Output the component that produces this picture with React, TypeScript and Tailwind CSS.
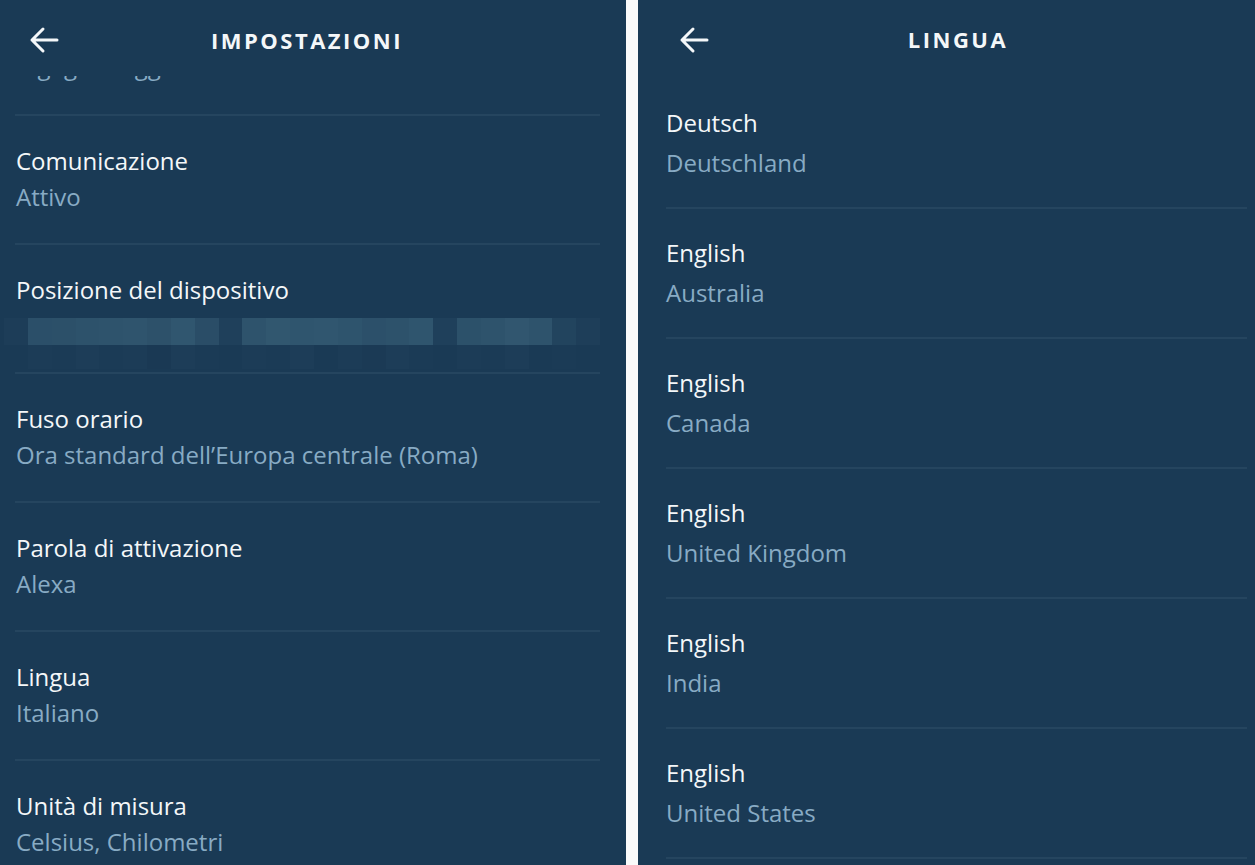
import { ReactNode } from "react";

const font = { fontFamily: '"Open Sans", "Noto Sans", sans-serif' };

function BackArrow() {
  return (
    <svg width="32" height="28" viewBox="0 0 32 28" fill="none" stroke="#f4f7f9" strokeWidth="3" strokeLinecap="round" strokeLinejoin="round">
      <path d="M29 14H4M15 3L4 14l11 11" />
    </svg>
  );
}

function Header({ title, className }: { title: string; className: string }) {
  return (
    <div className={`flex shrink-0 items-center ${className}`}>
      <BackArrow />
      <div className="flex-1 text-center text-[22px] font-bold tracking-[2.5px] text-[#f4f7f9]">{title}</div>
    </div>
  );
}

// pixelated (blurred) location line
const topBlocks = [
  "#1d3d58", "#2b4f69", "#2c5069", "#2d526b", "#2e536c", "#2f546d", "#2d516a", "#30566f", "#2a4d67",
  "#1f405b", "#2e536c", "#31576f", "#2f556e", "#30566f", "#2e546d", "#2c506a", "#2d526b", "#2f556e",
  "#1f405b", "#2c516a", "#2e536c", "#31566f", "#2e536c", "#22445e", "#1e3e59",
];
const bottomBlocks = [
  "#1a3a55", "#1c3c57", "#1b3b56", "#1d3d58", "#1b3b56", "#1c3c57", "#1a3954", "#1d3d58", "#1b3b56",
  "#1a3a55", "#1c3c57", "#1b3b56", "#1d3d58", "#1a3a55", "#1c3c57", "#1b3a55", "#1d3d58", "#1b3b56",
  "#1a3a55", "#1c3c57", "#1b3b56", "#1d3d58", "#1a3a55", "#1b3b56", "#1a3a55",
];

function Blurred() {
  return (
    <div className="-ml-[12px] flex flex-col pt-[10px]">
      <div className="flex h-[27px]">
        {topBlocks.map((c, i) => (
          <div key={i} className="h-full w-[24px]" style={{ background: c }} />
        ))}
      </div>
      <div className="flex h-[24px]">
        {bottomBlocks.map((c, i) => (
          <div key={i} className="h-full w-[24px]" style={{ background: c }} />
        ))}
      </div>
    </div>
  );
}

function LeftRow({ title, sub, children, pt = "pt-[27px]" }: { title?: string; sub?: string; children?: ReactNode; pt?: string }) {
  return (
    <div className={`flex h-[129px] shrink-0 flex-col pl-4 pr-[26px] ${pt}`}>
      <div className="h-[36px] text-[24px] leading-[36px] text-[#f4f7f9]">{title}</div>
      {sub !== undefined && <div className="text-[24px] leading-[36px] text-[#88abc4]">{sub}</div>}
      {children}
      <div className="mt-auto h-[2px] -ml-px bg-[#25455f]" />
    </div>
  );
}

function RightRow({ title, sub }: { title: string; sub: string }) {
  return (
    <div className="flex h-[130px] shrink-0 flex-col pl-7 pr-2 pt-[24px]">
      <div className="text-[24px] leading-[40px] text-[#f4f7f9]">{title}</div>
      <div className="text-[24px] leading-[40px] text-[#88abc4]">{sub}</div>
      <div className="mt-auto h-[2px] bg-[#25455f]" />
    </div>
  );
}

const languages = [
  ["Deutsch", "Deutschland"],
  ["English", "Australia"],
  ["English", "Canada"],
  ["English", "United Kingdom"],
  ["English", "India"],
  ["English", "United States"],
];

export default function App() {
  return (
    <div className="flex h-[865px] w-[1255px] overflow-hidden bg-[#fafafa]" style={font}>
      <div className="flex w-[626px] flex-col bg-[#1a3a55]">
        <Header title="IMPOSTAZIONI" className="h-[76px] pl-7 pr-[72px] pt-[4px]" />
        <div className="flex-1 overflow-hidden">
          <div className="-mt-[89px] flex flex-col">
            <LeftRow sub="Ingegnere gg" pt="pt-[25px]" />
            <LeftRow title="Comunicazione" sub="Attivo" />
            <LeftRow title="Posizione del dispositivo">
              <Blurred />
            </LeftRow>
            <LeftRow title="Fuso orario" sub="Ora standard dell’Europa centrale (Roma)" />
            <LeftRow title="Parola di attivazione" sub="Alexa" />
            <LeftRow title="Lingua" sub="Italiano" />
            <LeftRow title="Unità di misura" sub="Celsius, Chilometri" />
          </div>
        </div>
      </div>
      <div className="w-[12px] shrink-0 bg-[#fafafa]" />
      <div className="flex flex-1 flex-col bg-[#1a3a55]">
        <Header title="LINGUA" className="h-[79px] pl-[40px] pr-[49px]" />
        <div className="flex-1 overflow-hidden">
          {languages.map(([t, s], i) => (
            <RightRow key={i} title={t} sub={s} />
          ))}
        </div>
      </div>
    </div>
  );
}
